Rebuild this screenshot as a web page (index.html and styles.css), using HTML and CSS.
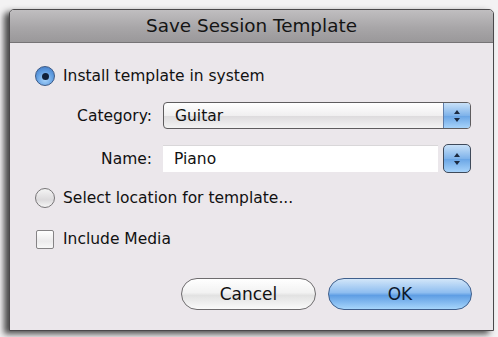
FILE: index.html
```html
<!DOCTYPE html>
<html>
<head>
<meta charset="utf-8">
<link rel="stylesheet" href="styles.css">
</head>
<body>
<div class="stage">
  <div class="window">
    <div class="titlebar">Save Session Template</div>
    <div class="content">
      <div class="row row-radio1">
        <span class="radio radio-on"><span class="dot"></span></span>
        <span class="label">Install template in system</span>
      </div>
      <div class="row row-cat">
        <span class="field-label">Category:</span>
        <div class="popup">
          <span class="popup-text">Guitar</span>
          <span class="stepper">
            <svg width="8" height="14" viewBox="0 0 8 14"><path d="M4 1 L7 5 L1 5 Z M4 13 L7 9 L1 9 Z" fill="#1c2a40"/></svg>
          </span>
        </div>
      </div>
      <div class="row row-name">
        <span class="field-label">Name:</span>
        <div class="textfield">Piano</div>
        <span class="stepper stepper-alone">
          <svg width="8" height="14" viewBox="0 0 8 14"><path d="M4 1 L7 5 L1 5 Z M4 13 L7 9 L1 9 Z" fill="#1c2a40"/></svg>
        </span>
      </div>
      <div class="row row-radio2">
        <span class="radio radio-off"></span>
        <span class="label">Select location for template...</span>
      </div>
      <div class="row row-check">
        <span class="checkbox"></span>
        <span class="label">Include Media</span>
      </div>
      <div class="buttons">
        <button class="btn btn-cancel">Cancel</button>
        <button class="btn btn-ok">OK</button>
      </div>
    </div>
  </div>
</div>
</body>
</html>
```

FILE: styles.css
```css
html, body {
  margin: 0;
  padding: 0;
  background: #f3f2f3;
  width: 498px;
  height: 337px;
  overflow: hidden;
  font-family: "DejaVu Sans", "Liberation Sans", sans-serif;
}
.stage {
  padding: 9px 0 0 9px;
}
.window {
  width: 485px;
  height: 322px;
  box-sizing: border-box;
  border: 1px solid #4a484a;
  border-radius: 5px 5px 0 0;
  background: #ebe7eb;
  box-shadow: -5px 3px 6px rgba(30, 30, 30, 0.8);
  display: flex;
  flex-direction: column;
}
.titlebar {
  height: 32px;
  flex: 0 0 32px;
  background: linear-gradient(#c0bec0, #a8a6a8 55%, #9a989a);
  border-bottom: 1px solid #767476;
  border-radius: 4px 4px 0 0;
  text-align: center;
  font-size: 18.4px;
  line-height: 32px;
  color: #141414;
}
.content {
  display: flex;
  flex-direction: column;
  padding: 23px 21px 0 25px;
}
.row {
  display: flex;
  align-items: center;
}
.label {
  font-size: 15.5px;
  color: #111;
  margin-left: 8px;
}
.radio {
  width: 20px;
  height: 20px;
  box-sizing: border-box;
  border-radius: 50%;
  display: flex;
  align-items: center;
  justify-content: center;
}
.radio-on {
  border: 1px solid #3c5a86;
  background: radial-gradient(circle at 50% 70%, #a8d4fb 0%, #5f9ce0 55%, #3d74c0 100%);
}
.radio-on .dot {
  width: 7px;
  height: 7px;
  border-radius: 50%;
  background: #10213a;
}
.radio-off {
  border: 1px solid #777577;
  background: linear-gradient(#f4f4f4, #dcdadc 60%, #f6f6f6);
}
.row-radio1 { height: 20px; }
.row-cat { height: 27px; margin-top: 16px; }
.row-name { height: 29px; margin-top: 15px; }
.row-radio2 { height: 20px; margin-top: 15px; }
.row-check { height: 20px; margin-top: 21px; }
.field-label {
  width: 92px;
  margin-left: 25px;
  text-align: right;
  font-size: 15.5px;
  color: #111;
}
.popup {
  margin-left: 11px;
  width: 308px;
  height: 27px;
  box-sizing: border-box;
  border: 1px solid #5e5c5e;
  border-radius: 4px;
  background: linear-gradient(#ffffff, #f0eff0 50%, #dddbdd 52%, #f3f3f3);
  display: flex;
  align-items: center;
  justify-content: space-between;
  overflow: hidden;
}
.popup-text {
  font-size: 15.5px;
  color: #111;
  margin-left: 11px;
}
.stepper {
  width: 27px;
  height: 100%;
  box-sizing: border-box;
  background: linear-gradient(#c9e1f8, #7fb3ea 50%, #6aa5e5 52%, #a7d3fa);
  border-left: 1px solid #5f7da8;
  display: flex;
  align-items: center;
  justify-content: center;
}
.stepper-alone {
  width: 28px;
  height: 29px;
  border: 1px solid #3f4a5a;
  border-radius: 5px;
  margin-left: 5px;
}
.textfield {
  margin-left: 11px;
  width: 275px;
  height: 27px;
  box-sizing: border-box;
  background: #ffffff;
  border-top: 1px solid #d9d7d9;
  font-size: 15.5px;
  color: #111;
  padding-left: 11px;
  line-height: 26px;
}
.checkbox {
  width: 18px;
  height: 19px;
  box-sizing: border-box;
  margin-left: 1px;
  margin-right: 1px;
  border: 1px solid #858385;
  border-radius: 2px;
  background: linear-gradient(#ffffff, #ecebec 60%, #f8f8f8);
}
.buttons {
  display: flex;
  justify-content: flex-end;
  gap: 12px;
  margin-top: 29px;
}
.btn {
  height: 32px;
  border-radius: 16px;
  font-family: "DejaVu Sans", "Liberation Sans", sans-serif;
  font-size: 17px;
  color: #111;
  padding: 0;
  box-sizing: border-box;
}
.btn-cancel {
  width: 135px;
  border: 1px solid #6e6c6e;
  background: linear-gradient(#ffffff, #f2f2f2 45%, #e2e2e2 55%, #fafafa);
}
.btn-ok {
  width: 144px;
  border: 1px solid #3f5f8c;
  background: linear-gradient(#d2e6f9, #8fbef0 45%, #5f9ee4 55%, #a6d5fb);
  color: #0e1a2c;
}
```
